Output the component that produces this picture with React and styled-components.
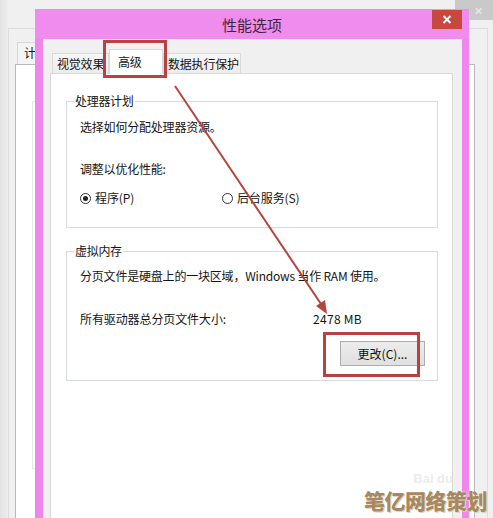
import React from "react";
import styled, { createGlobalStyle } from "styled-components";

const Global = createGlobalStyle`
  html, body { margin: 0; padding: 0; background: #f0f0f0; overflow: hidden; }
  * { box-sizing: border-box; }
`;

const Desktop = styled.div`
  position: relative;
  width: 493px;
  height: 518px;
  overflow: hidden;
  background: linear-gradient(to right, #e2e2e2 0, #ececec 7px, #f0f0f0 8px);
  font-family: "Noto Sans CJK SC", "Noto Sans", sans-serif;
  color: #151515;
`;

/* ---------- background window ---------- */
const BgWindow = styled.div`
  position: absolute;
  left: 8px;
  top: 28px;
  width: 480px;
  height: 520px;
  background: #f0f0f0;
  border: 1px solid #dcdcdc;
  border-bottom: none;
  padding: 13px 12px 0 6px;
  display: flex;
  flex-direction: column;
`;

const BgTab = styled.div`
  width: 40px;
  height: 22px;
  margin-left: 2px;
  border: 1px solid #d6d6d6;
  border-bottom: none;
  background: #f4f4f4;
  font-size: 12px;
  line-height: 20px;
  padding-left: 6px;
`;

const BgPanel = styled.div`
  flex: 1;
  background: #fff;
  border: 1px solid #b9b9b9;
  border-bottom: none;
  padding: 36px 4px 0 16px;
  display: flex;
  justify-content: space-between;
`;

const BgGroup = styled.div`
  width: 200px;
  height: 368px;
  border: 1px solid #e6e6e6;
`;

const BgGroupRight = styled.div`
  width: 6px;
  height: 420px;
  border-left: 1px solid #cfcfcf;
`;

const BgClose = styled.div`
  position: absolute;
  top: 0;
  right: 0;
  width: 38px;
  height: 20px;
  background: #c9c9c9;
  color: #ececec;
  font-size: 11px;
  display: flex;
  align-items: flex-end;
  justify-content: flex-end;
  padding: 0 10px 2px 0;
`;

/* ---------- dialog ---------- */
const Dialog = styled.div`
  position: absolute;
  left: 35px;
  top: 9px;
  width: 434px;
  height: 540px;
  background: #ee86ec;
  display: flex;
  flex-direction: column;
`;

const TitleBar = styled.div`
  position: relative;
  height: 30px;
  flex: none;
  display: flex;
  align-items: center;
  justify-content: center;
  font-size: 15px;
  color: #3e243e;
  background: #f08cee;
`;

const CloseButton = styled.div`
  position: absolute;
  top: 1px;
  right: 7px;
  width: 30px;
  height: 19px;
  background: #c8473f;
  display: flex;
  align-items: center;
  justify-content: center;
`;

const DialogBody = styled.div`
  flex: 1;
  margin: 0 7px 0 8px;
  background: #f0f0f0;
  padding: 10px 9px 0 7px;
  display: flex;
  flex-direction: column;
`;

const TabStrip = styled.div`
  display: flex;
  align-items: flex-end;
  height: 24px;
  padding-left: 2px;
  flex: none;
`;

const Tab = styled.div`
  width: ${p => p.$w}px;
  height: ${p => (p.$active ? 25 : 20)}px;
  margin-bottom: ${p => (p.$active ? -1 : 0)}px;
  position: relative;
  z-index: ${p => (p.$active ? 1 : 0)};
  border: 1px solid #d9d9d9;
  border-bottom: none;
  background: ${p => (p.$active ? "#fff" : "linear-gradient(#f7f7f7, #ececec)")};
  font-size: 12px;
  line-height: 16px;
  padding: ${p => (p.$active ? "4px 0 0 8px" : "2px 0 0 4px")};
  white-space: nowrap;
  letter-spacing: -0.2px;
`;

const Panel = styled.div`
  flex: 1;
  background: #fff;
  border: 1px solid #d9d9d9;
  border-bottom: none;
  padding: 19px 14px 0 15px;
`;

const GroupBox = styled.fieldset`
  margin: 0;
  min-width: 0;
  border: 1px solid #d8dcdf;
  padding: 0 ${p => p.$pr}px ${p => p.$pb}px 13px;
  & + & {
    margin-top: 15px;
  }
`;

const Legend = styled.legend`
  margin-left: -6px;
  padding: 0 1px;
  font-size: 12px;
  line-height: 16px;
  letter-spacing: -0.3px;
`;

const Line = styled.div`
  font-size: 12px;
  line-height: 16px;
  margin-top: ${p => p.$mt}px;
  white-space: nowrap;
  letter-spacing: -0.2px;
`;

const RadioRow = styled.div`
  display: grid;
  grid-template-columns: 142px auto;
  margin-top: 13px;
  font-size: 12px;
  line-height: 16px;
  letter-spacing: -0.1px;
`;

const RadioOption = styled.label`
  display: flex;
  align-items: center;
  gap: 4px;
  white-space: nowrap;
`;

const RadioCircle = styled.span`
  width: 11px;
  height: 11px;
  border-radius: 50%;
  border: 1px solid #333;
  background: #fff;
  display: flex;
  align-items: center;
  justify-content: center;
  &::after {
    content: "";
    width: 5px;
    height: 5px;
    border-radius: 50%;
    background: ${p => (p.$checked ? "#222" : "transparent")};
  }
`;

const SizeRow = styled.div`
  display: flex;
  margin-top: 27px;
  font-size: 12px;
  line-height: 16px;
  white-space: nowrap;
  letter-spacing: -0.1px;
`;

const SizeLabel = styled.span`
  width: 233px;
`;

const SizeValue = styled.span`
  letter-spacing: 0.3px;
`;

const ButtonRow = styled.div`
  display: flex;
  justify-content: flex-end;
  margin-top: 14px;
`;

const Button = styled.button`
  width: 85px;
  height: 25px;
  padding: 0;
  border: 1px solid #adadad;
  background: linear-gradient(#ececec, #e0e0e0);
  font-family: inherit;
  font-size: 12px;
  color: #111;
  letter-spacing: 0;
`;

/* ---------- annotations ---------- */
const Highlight = styled.div`
  position: absolute;
  left: ${p => p.$x}px;
  top: ${p => p.$y}px;
  width: ${p => p.$w}px;
  height: ${p => p.$h}px;
  border: 3px solid #b8423f;
  pointer-events: none;
`;

const ArrowLayer = styled.svg`
  position: absolute;
  left: 0;
  top: 0;
  width: 493px;
  height: 518px;
  pointer-events: none;
`;

const Watermark = styled.div`
  position: absolute;
  right: 6px;
  bottom: 7px;
  display: flex;
  flex-direction: column;
  align-items: flex-end;
  gap: 4px;
`;

const WatermarkLogo = styled.div`
  font-family: "Liberation Sans", sans-serif;
  font-size: 13px;
  font-weight: 700;
  color: #ececec;
  margin-right: 34px;
  line-height: 13px;
`;

const WatermarkText = styled.div`
  font-family: "Noto Sans CJK SC", sans-serif;
  font-size: 21px;
  font-weight: 900;
  color: #a8885e;
  line-height: 22px;
  letter-spacing: -0.5px;
  text-shadow: 0 0 2px #fff, 1px 1px 0 #d9c7aa;
`;

export default function App() {
  return (
    <Desktop>
      <Global />
      <BgWindow>
        <BgTab>计</BgTab>
        <BgPanel>
          <BgGroup />
          <BgGroupRight />
        </BgPanel>
      </BgWindow>
      <BgClose>✕</BgClose>

      <Dialog>
        <TitleBar>
          性能选项
          <CloseButton>
            <svg width="10" height="9" viewBox="0 0 10 9">
              <path d="M1.5 1 L8.5 8 M8.5 1 L1.5 8" stroke="#fff" strokeWidth="2" />
            </svg>
          </CloseButton>
        </TitleBar>
        <DialogBody>
          <TabStrip>
            <Tab $w={57}>视觉效果</Tab>
            <Tab $w={54} $active>高级</Tab>
            <Tab $w={78}>数据执行保护</Tab>
          </TabStrip>
          <Panel>
            <GroupBox $pr={13} $pb={21}>
              <Legend>处理器计划</Legend>
              <Line $mt={10}>选择如何分配处理器资源。</Line>
              <Line $mt={26}>调整以优化性能:</Line>
              <RadioRow>
                <RadioOption>
                  <RadioCircle $checked />
                  程序(P)
                </RadioOption>
                <RadioOption>
                  <RadioCircle />
                  后台服务(S)
                </RadioOption>
              </RadioRow>
            </GroupBox>
            <GroupBox $pr={12} $pb={14}>
              <Legend>虚拟内存</Legend>
              <Line $mt={9}>分页文件是硬盘上的一块区域，Windows 当作 RAM 使用。</Line>
              <SizeRow>
                <SizeLabel>所有驱动器总分页文件大小:</SizeLabel>
                <SizeValue>2478 MB</SizeValue>
              </SizeRow>
              <ButtonRow>
                <Button>更改(C)...</Button>
              </ButtonRow>
            </GroupBox>
          </Panel>
        </DialogBody>
      </Dialog>

      <Highlight $x={103} $y={40} $w={64} $h={38} />
      <Highlight $x={323} $y={332} $w={97} $h={45} />
      <ArrowLayer viewBox="0 0 493 518">
        <line x1="175" y1="86" x2="321" y2="304" stroke="#b4443f" strokeWidth="2" />
        <polygon points="327,314 316,306 325,300" fill="#b4443f" />
      </ArrowLayer>

      <Watermark>
        <WatermarkLogo>Bai du</WatermarkLogo>
        <WatermarkText>笔亿网络策划</WatermarkText>
      </Watermark>
    </Desktop>
  );
}
